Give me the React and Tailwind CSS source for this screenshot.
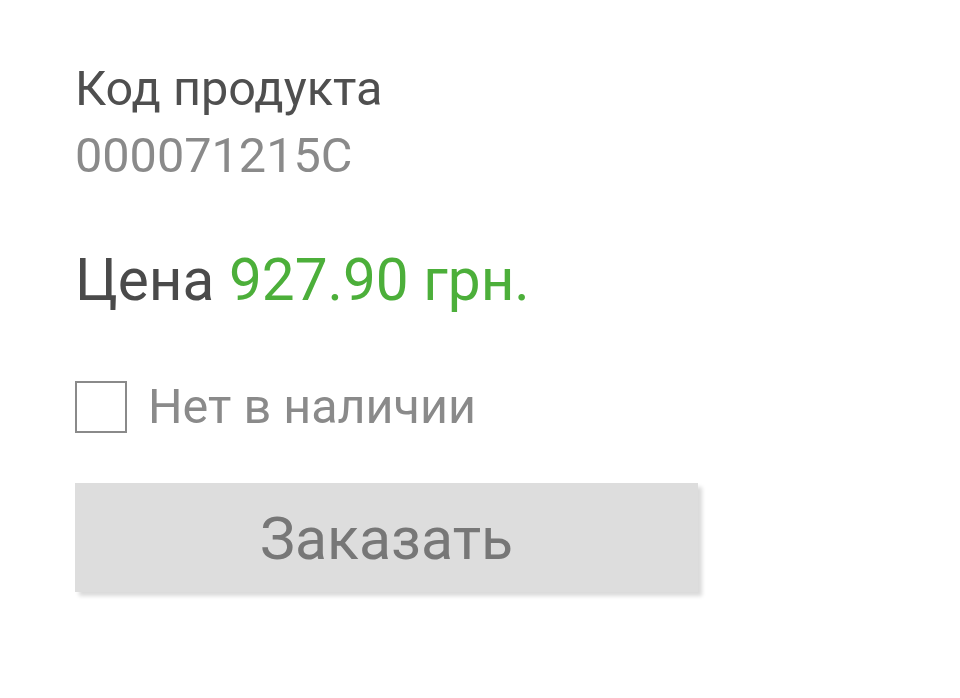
export default function App() {
  return (
    <div className="w-[960px] h-[698px] bg-white" style={{ fontFamily: "Roboto, sans-serif" }}>
      <div className="flex flex-col pl-[75px] pt-[55px]">
        <div className="text-[48.6px] leading-[67px] text-[#4f4f4f]">Код продукта</div>
        <div className="text-[48.6px] leading-[67px] text-[#8a8a8a]">000071215C</div>
        <div className="mt-[56px] text-[58.5px] leading-[70px] text-[#4a4a4a]">
          Цена <span className="text-[#4caf3a]">927.90 грн.</span>
        </div>
        <div className="mt-[66px] flex items-center gap-[21px]">
          <div className="w-[52px] h-[52px] border-2 border-[#8a8a8a] bg-white"></div>
          <div className="text-[48.5px] leading-[52px] text-[#8a8a8a]">Нет в наличии</div>
        </div>
        <button className="mt-[50px] w-[623px] h-[109px] bg-[#dddddd] shadow-[4px_4px_4px_rgba(0,0,0,0.15)] text-[59px] text-[#777777] flex items-center justify-center pt-[4px]">
          Заказать
        </button>
      </div>
    </div>
  );
}
